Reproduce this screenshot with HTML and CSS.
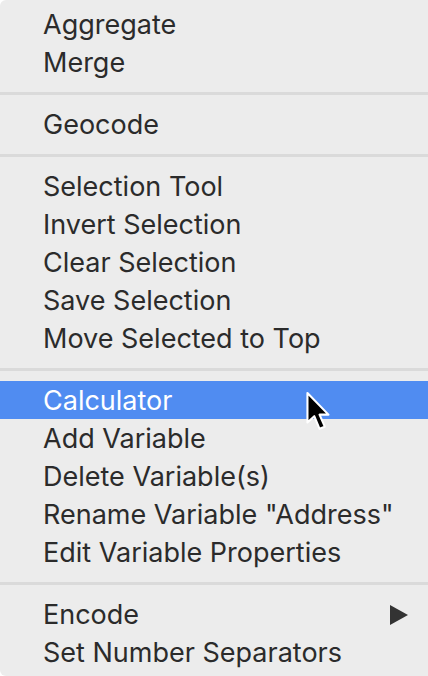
FILE: index.html
```html
<!DOCTYPE html>
<html>
<head>
<meta charset="utf-8">
<link rel="stylesheet" href="styles.css">
</head>
<body>
<div class="menu">
  <div class="item">Aggregate</div>
  <div class="item">Merge</div>
  <div class="sep"></div>
  <div class="item">Geocode</div>
  <div class="sep"></div>
  <div class="item">Selection Tool</div>
  <div class="item">Invert Selection</div>
  <div class="item">Clear Selection</div>
  <div class="item">Save Selection</div>
  <div class="item">Move Selected to Top</div>
  <div class="sep"></div>
  <div class="item active">Calculator
    <svg class="cursor" width="28" height="42" viewBox="0 0 26 40">
      <path d="M2 2 L2 30 L8.5 24 L13.5 36 L18.5 34 L13.5 22.5 L22 22.5 Z" fill="#000" stroke="#fff" stroke-width="2" stroke-linejoin="round"/>
    </svg>
  </div>
  <div class="item">Add Variable</div>
  <div class="item">Delete Variable(s)</div>
  <div class="item">Rename Variable "Address"</div>
  <div class="item">Edit Variable Properties</div>
  <div class="sep"></div>
  <div class="item sub">Encode
    <svg class="arrow" width="18" height="20" viewBox="0 0 18 20"><path d="M0 0 L18 10 L0 20 Z" fill="#333"/></svg>
  </div>
  <div class="item">Set Number Separators</div>
</div>
</body>
</html>
```
FILE: styles.css
```css
html, body {
  margin: 0;
  padding: 0;
  background: #ffffff;
}
.menu {
  width: 428px;
  height: 676px;
  box-sizing: border-box;
  padding-top: 5px;
  background: #ececec;
  border-radius: 6px 0 0 6px;
  font-family: Inter, "Noto Sans", sans-serif;
  font-size: 27px;
  color: #2b2b2b;
  display: flex;
  flex-direction: column;
}
.item {
  position: relative;
  box-sizing: border-box;
  height: 38px;
  padding-top: 2px;
  line-height: 36px;
  padding-left: 43px;
  white-space: nowrap;
}
.item.active {
  background: #508cf1;
  color: #ffffff;
}
.sep {
  height: 3px;
  margin: 11px 0 10px;
  background: #dadada;
}
.cursor {
  position: absolute;
  left: 305px;
  top: 10px;
}
.sub {
  display: flex;
  align-items: center;
  justify-content: space-between;
  padding-right: 20px;
}
```
